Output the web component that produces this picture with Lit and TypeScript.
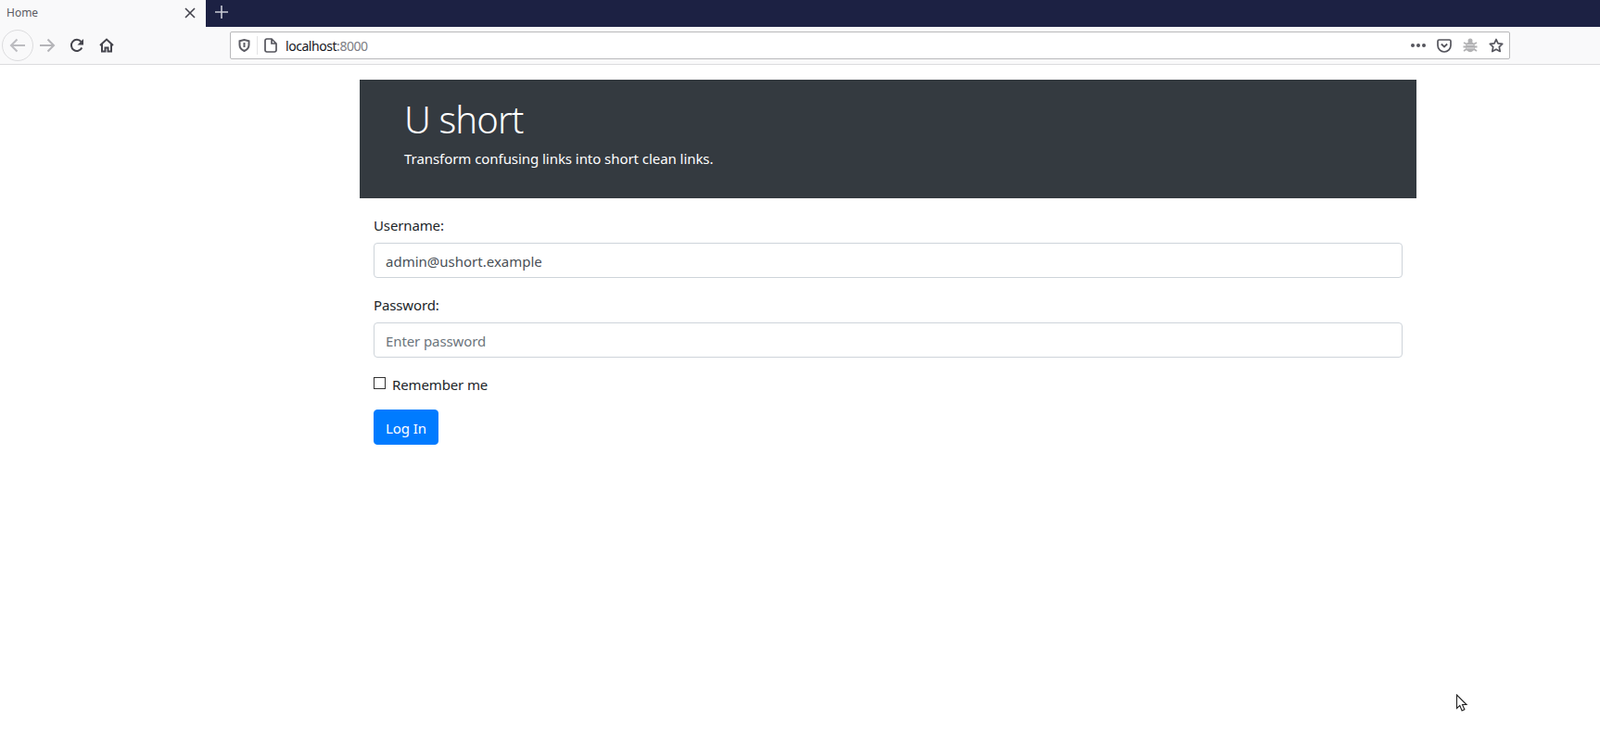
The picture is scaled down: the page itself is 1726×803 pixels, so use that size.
import { html, css, LitElement } from "lit";
import { customElement } from "lit/decorators.js";

@customElement("browser-chrome")
export class BrowserChrome extends LitElement {
  override render() {
    return html`
      <div class="tabstrip">
        <div class="tab">
          <span class="tab-title">Home</span>
          <svg class="tab-close" width="12" height="12" viewBox="0 0 12 12"><path d="M1 1l10 10M11 1L1 11" stroke="#45454f" stroke-width="1.6" fill="none"/></svg>
        </div>
        <svg class="new-tab" width="16" height="16" viewBox="0 0 16 16"><path d="M8 1v14M1 8h14" stroke="#c9cbd6" stroke-width="1.6" fill="none"/></svg>
      </div>
      <div class="toolbar">
        <div class="back">
          <svg width="18" height="16" viewBox="0 0 18 16"><path d="M17 8H2M8.5 1.5L2 8l6.500 6.500" stroke="#bcbcc0" stroke-width="2" fill="none"/></svg>
        </div>
        <svg class="forward" width="18" height="16" viewBox="0 0 18 16"><path d="M1 8h15M9.500 1.500L16 8l-6.500 6.500" stroke="#b4b4b8" stroke-width="2" fill="none"/></svg>
        <svg class="reload" width="16" height="16" viewBox="0 0 16 16"><path d="M13.300 10.500A6 6 0 1 1 12.500 4" stroke="#45454d" stroke-width="2" fill="none"/><path d="M15 1v6.500H8.500z" fill="#45454d"/></svg>
        <svg class="home" width="16" height="16" viewBox="0 0 16 16"><path d="M1 8l7-6.500L15 8M3 6.500V14.500h3.500V10.500h3v4H13V6.500" stroke="#45454d" stroke-width="2" fill="none"/></svg>
        <div class="urlbar">
          <svg class="shield" width="13" height="14" viewBox="0 0 13 14"><path d="M1.500 2.200L6.500 1l5 1.200v4.300c0 3-2 5.200-5 6.500-3-1.300-5-3.500-5-6.500z" stroke="#5c5c64" stroke-width="2" fill="none"/><path d="M6.500 4v5" stroke="#5c5c64" stroke-width="2"/></svg>
          <span class="sep"></span>
          <svg class="page" width="14" height="16" viewBox="0 0 14 16"><path d="M2.800 1h5.200l5 5v7.200a1.800 1.800 0 0 1-1.800 1.800H2.800A1.800 1.800 0 0 1 1 13.200V2.800A1.800 1.800 0 0 1 2.800 1zM8 1v5h5" stroke="#55555d" stroke-width="1.700" fill="none"/></svg>
          <span class="url">localhost<span class="port">:8000</span></span>
          <span class="dots"><i></i><i></i><i></i></span>
          <svg class="pocket" width="16" height="15" viewBox="0 0 16 15"><path d="M1 2.500A1.500 1.500 0 0 1 2.500 1h11A1.500 1.500 0 0 1 15 2.500V7a7 7 0 0 1-14 0z" stroke="#55555d" stroke-width="1.700" fill="none"/><path d="M4.800 5.500L8 8.500l3.200-3" stroke="#55555d" stroke-width="1.800" fill="none"/></svg>
          <svg class="bug" width="16" height="16" viewBox="0 0 16 16"><circle cx="8" cy="3" r="2.500" fill="#b1b1b3"/><ellipse cx="8" cy="9.500" rx="5" ry="5.800" fill="#b1b1b3"/><path d="M1 5l3 1.500M15 5l-3 1.500M.5 9.500h3M15.500 9.500h-3M1 14l3-2M15 14l-3-2" stroke="#b1b1b3" stroke-width="1.800" fill="none"/><path d="M4.500 7.500h7M4 11h8" stroke="#ececee" stroke-width=".8"/></svg>
          <svg class="star" width="16" height="16" viewBox="0 0 16 16"><path d="M8 1.500l2 4.300 4.700.6-3.400 3.300.9 4.800L8 12.200l-4.200 2.300.9-4.800L1.300 6.400 6 5.800z" stroke="#55555d" stroke-width="1.700" stroke-linejoin="round" fill="none"/></svg>
        </div>
      </div>
    `;
  }

  static styles = css`
    :host {
      display: block;
      font-family: "Noto Sans", sans-serif;
    }
    .tabstrip {
      display: flex;
      align-items: center;
      height: 29px;
      background: #1c2143;
    }
    .tab {
      width: 222px;
      height: 29px;
      box-sizing: border-box;
      padding: 0 11px 2px 7px;
      display: flex;
      align-items: center;
      justify-content: space-between;
      background: #f9f9fa;
    }
    .tab-title {
      font-size: 12px;
      color: #5b5b63;
    }
    .new-tab {
      margin: -3px 0 0 9px;
    }
    .toolbar {
      display: flex;
      align-items: center;
      height: 40px;
      background: #f9f9fa;
      border-bottom: 1px solid #dcdcde;
    }
    .back {
      width: 32px;
      height: 32px;
      margin-left: 2px;
      border: 1px solid #dcdcde;
      border-radius: 50%;
      display: flex;
      align-items: center;
      justify-content: center;
      flex: none;
    }
    .forward {
      margin-left: 6px;
    }
    .reload {
      margin-left: 15px;
    }
    .home {
      margin-left: 16px;
    }
    .urlbar {
      display: flex;
      align-items: center;
      width: 1381px;
      height: 30px;
      box-sizing: border-box;
      margin-left: 125px;
      background: #fff;
      border: 1px solid #b9b9bb;
      border-radius: 2px;
    }
    .shield {
      margin-left: 8px;
    }
    .sep {
      width: 1px;
      height: 20px;
      margin-left: 7px;
      background: #e4e4e6;
    }
    .page {
      margin-left: 7px;
    }
    .url {
      margin-left: 9px;
      font-size: 14px;
      letter-spacing: -0.45px;
      color: #16161c;
      flex: 1;
    }
    .port {
      color: #7d7d84;
    }
    .dots {
      display: flex;
      gap: 2px;
    }
    .dots i {
      width: 4px;
      height: 4px;
      border-radius: 50%;
      background: #55555d;
    }
    .pocket {
      margin-left: 12px;
    }
    .bug {
      margin-left: 12px;
    }
    .star {
      margin: 0 6px 0 12px;
    }
  `;
}

@customElement("app-root")
export class AppRoot extends LitElement {
  override render() {
    return html`
      <browser-chrome></browser-chrome>
      <main class="container">
        <header class="jumbotron">
          <h1>U short</h1>
          <p>Transform confusing links into short clean links.</p>
        </header>
        <form class="login">
          <div class="group">
            <label>Username:</label>
            <input type="text" .value=${"admin@ushort.example"} />
          </div>
          <div class="group">
            <label>Password:</label>
            <input type="password" placeholder="Enter password" />
          </div>
          <div class="remember">
            <span class="check"></span>
            <label>Remember me</label>
          </div>
          <button type="button">Log In</button>
        </form>
      </main>
      <svg class="cursor" width="14" height="20" viewBox="0 0 14 20"><path d="M1.500 1v14.500l3.300-3 2.300 5.500 2.800-1.200-2.400-5.300h4.500z" fill="#fff" stroke="#222" stroke-width="1.100"/></svg>
    `;
  }

  static styles = css`
    :host {
      display: block;
      position: relative;
      height: 803px;
      overflow: hidden;
      background: #fff;
      font-family: "Noto Sans", sans-serif;
      font-size: 16px;
      color: #212529;
    }
    .container {
      width: 1140px;
      margin: 16px 0 0 388px;
    }
    .jumbotron {
      height: 128px;
      box-sizing: border-box;
      padding: 19px 48px 0;
      background: #343a40;
      color: #fff;
    }
    h1 {
      margin: 0;
      font-size: 40px;
      line-height: 48px;
      font-weight: 300;
      letter-spacing: -0.9px;
    }
    .jumbotron p {
      margin: 6px 0 0;
      font-size: 15px;
      line-height: 24px;
      letter-spacing: -0.055px;
    }
    .login {
      padding: 17px 15px 0;
    }
    .group {
      margin-bottom: 17px;
    }
    label {
      display: block;
      height: 24px;
      font-size: 15px;
      line-height: 24px;
      letter-spacing: -0.13px;
    }
    .group label {
      margin-bottom: 7px;
    }
    input {
      display: block;
      width: 100%;
      height: 38px;
      box-sizing: border-box;
      padding: 7px 12px 5px;
      border: 1px solid #ced4da;
      border-radius: 4px;
      background: #fff;
      color: #495057;
      font: inherit;
      font-size: 15px;
      outline: none;
    }
    input::placeholder {
      color: #6c757d;
      opacity: 1;
      letter-spacing: -0.1px;
    }
    .remember {
      display: flex;
      align-items: center;
      margin-bottom: 15px;
    }
    .check {
      width: 13px;
      height: 13px;
      box-sizing: border-box;
      margin: -3px 7px 0 0;
      border: 1px solid #333;
      background: #fff;
    }
    button {
      display: block;
      width: 70px;
      height: 38px;
      padding: 2px 0 0;
      border: 1px solid #007bff;
      border-radius: 4px;
      background: #007bff;
      color: #fff;
      font: inherit;
      font-size: 15px;
      letter-spacing: -0.1px;
    }
    .cursor {
      position: absolute;
      left: 1570px;
      top: 749px;
    }
  `;
}
